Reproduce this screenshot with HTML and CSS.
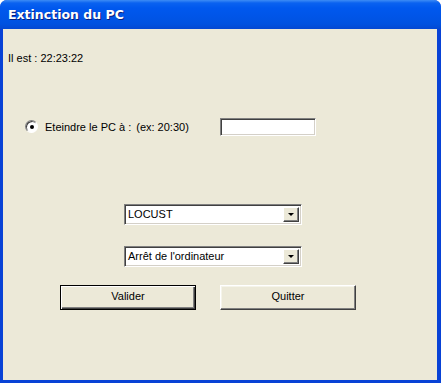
FILE: index.html
```html
<!DOCTYPE html>
<html lang="fr">
<head>
    <meta charset="UTF-8">
    <title>Extinction du PC</title>
    <link rel="stylesheet" href="styles.css">
</head>
<body>
    <div class="window">
        <div class="titlebar">Extinction du PC</div>
        <div class="client">
            <div class="clock">Il est : 22:23:22</div>

            <div class="row-radio">
                <span class="radio"><span class="dot"></span></span>
                <span class="label">Eteindre le PC à :</span>
                <span class="hint">(ex: 20:30)</span>
                <span class="textbox"></span>
            </div>

            <div class="combo combo-first">
                <span class="combo-text">LOCUST</span>
                <span class="combo-btn"><span class="arrow"></span></span>
            </div>
            <div class="combo">
                <span class="combo-text">Arrêt de l'ordinateur</span>
                <span class="combo-btn"><span class="arrow"></span></span>
            </div>

            <div class="buttons">
                <div class="btn default">Valider</div>
                <div class="btn">Quitter</div>
            </div>
        </div>
    </div>
</body>
</html>
```

FILE: styles.css
```css
body{
    margin: 0;
    background: #ffffff;
    font-family: "Liberation Sans", Arial, sans-serif;
    font-size: 11px;
    color: #000;
}
.window{
    width: 441px;
    height: 383px;
    display: flex;
    flex-direction: column;
    border-radius: 7px 7px 0 0;
    background: #0842d6;
    overflow: hidden;
}
.titlebar{
    height: 29px;
    line-height: 29px;
    padding-left: 8px;
    color: #fff;
    font-family: "DejaVu Sans", sans-serif;
    font-weight: bold;
    font-size: 12.5px;
    text-shadow: 1px 1px #0a1f7d;
    background: linear-gradient(
        to bottom,
        #3d8cf5 0px,
        #0a62f0 3px,
        #0058ee 8px,
        #0055e8 16px,
        #0052e0 24px,
        #0448d2 29px
    );
}
.client{
    flex: 1;
    margin: 0 4px 3px 3px;
    background: #ece9d8;
}

.clock{
    margin-top: 22px;
    padding-left: 5px;
    height: 14px;
    line-height: 14px;
}

.row-radio{
    display: flex;
    align-items: center;
    margin-top: 52px;
    height: 19px;
}
.radio{
    width: 11px;
    height: 11px;
    margin-left: 22px;
    border-radius: 50%;
    background: #fff;
    border: 1px solid;
    border-color: #808080 #ffffff #ffffff #808080;
    box-shadow: inset 1px 1px #404040;
    display: flex;
    align-items: center;
    justify-content: center;
}
.dot{
    width: 4px;
    height: 4px;
    border-radius: 50%;
    background: #000;
}
.label{
    margin-left: 7px;
}
.hint{
    margin-left: 5px;
}
.textbox{
    margin-left: 31px;
    width: 94px;
    height: 16px;
    background: #fff;
    border: 1px solid;
    border-color: #808080 #ffffff #ffffff #808080;
    box-shadow: inset 1px 1px #404040, inset -1px -1px #d4d0c8;
}

.combo{
    display: flex;
    align-items: center;
    margin-left: 121px;
    margin-top: 21px;
    width: 172px;
    height: 16px;
    padding: 1px 2px 2px 2px;
    background: #fff;
    border: 1px solid;
    border-color: #808080 #ffffff #ffffff #808080;
    box-shadow: inset 1px 1px #404040, inset -1px -1px #d4d0c8;
}
.combo-first{
    margin-top: 68px;
}
.combo-text{
    flex: 1;
    line-height: 16px;
    padding-left: 1px;
}
.combo-btn{
    box-sizing: border-box;
    width: 16px;
    height: 15px;
    background: #ece9d8;
    border: 1px solid;
    border-color: #ffffff #404040 #404040 #ffffff;
    box-shadow: inset -1px -1px #808080;
    display: flex;
    align-items: center;
    justify-content: center;
}
.arrow{
    width: 0;
    height: 0;
    border-left: 3px solid transparent;
    border-right: 3px solid transparent;
    border-top: 3px solid #000;
}

.buttons{
    display: flex;
    gap: 24px;
    margin-left: 57px;
    margin-top: 18px;
}
.btn{
    box-sizing: border-box;
    width: 136px;
    height: 25px;
    line-height: 21px;
    text-align: center;
    background: #ece9d8;
    border: 1px solid;
    border-color: #ffffff #404040 #404040 #ffffff;
    box-shadow: inset -1px -1px #808080, inset 1px 1px #f5f4ea;
}
.btn.default{
    border: 1px solid #000;
    box-shadow: inset 1px 1px #ffffff, inset -1px -1px #404040, inset -2px -2px #808080;
}
```
